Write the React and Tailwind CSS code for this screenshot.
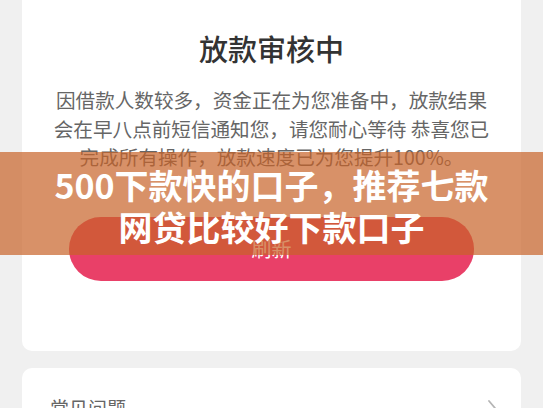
import React from 'react';

const FONT = '"Noto Sans CJK SC", "Noto Sans", sans-serif';

const LINES = [
  '因借款人数较多，资金正在为您准备中，放款结果',
  '会在早八点前短信通知您，请您耐心等待 恭喜您已',
  '完成所有操作，放款速度已为您提升100%。',
];

function ChevronRight() {
  return (
    <svg width="10" height="18" viewBox="0 0 10 18" fill="none">
      <path d="M2 2l6 7-6 7" stroke="#b5b5b5" strokeWidth="1.8" strokeLinecap="round" strokeLinejoin="round" />
    </svg>
  );
}

export default function App() {
  return (
    <div className="relative w-[543px] h-[408px] overflow-hidden bg-[#f0f0f0]" style={{ fontFamily: FONT }}>
      <div className="flex flex-col gap-[17px] px-[22px]">
        {/* status card */}
        <div className="flex flex-col items-center bg-white rounded-b-[10px] pt-[28px] pb-[70px]">
          <h1 className="text-[29px] leading-[40px] font-medium text-[#333]">放款审核中</h1>
          <div className="mt-[18px] flex flex-col items-center text-[19.6px] leading-[28.5px] text-[#666]">
            {LINES.map((line) => (
              <p key={line} className="whitespace-nowrap">{line}</p>
            ))}
          </div>
          <button className="mt-[45px] w-[405px] h-[64px] rounded-full bg-[#e94068] text-white text-[20px]">
            刷新
          </button>
        </div>

        {/* faq card */}
        <div className="flex items-center justify-between bg-white rounded-[10px] pl-[28px] pr-[24px] pt-[28px] pb-[30px]">
          <span className="text-[19px] leading-[24px] text-[#666]">常见问题</span>
          <ChevronRight />
        </div>
      </div>

      {/* title banner over the page */}
      <div className="absolute left-0 top-[152px] w-full h-[103px] bg-[rgba(199,98,40,0.7)] flex flex-col items-center justify-center pt-[4px]">
        <p className="text-white font-bold text-[34px] leading-[42px] whitespace-nowrap">500下款快的口子，推荐七款</p>
        <p className="text-white font-bold text-[34px] leading-[42px] whitespace-nowrap">网贷比较好下款口子</p>
      </div>
    </div>
  );
}
